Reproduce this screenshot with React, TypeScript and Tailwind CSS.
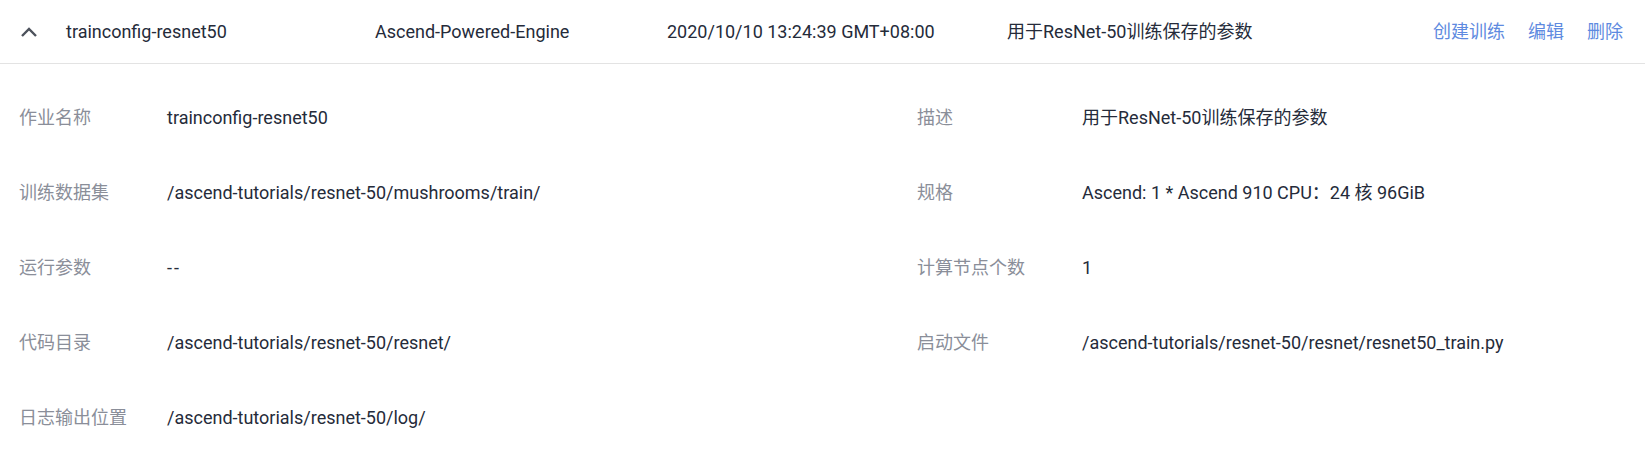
import React from "react";

const font = { fontFamily: 'Roboto, "Noto Sans CJK SC", sans-serif' };

const leftRows = [
  ["作业名称", "trainconfig-resnet50"],
  ["训练数据集", "/ascend-tutorials/resnet-50/mushrooms/train/"],
  ["运行参数", "--"],
  ["代码目录", "/ascend-tutorials/resnet-50/resnet/"],
  ["日志输出位置", "/ascend-tutorials/resnet-50/log/"],
];

const rightRows = [
  ["描述", "用于ResNet-50训练保存的参数"],
  ["规格", "Ascend: 1 * Ascend 910 CPU：24 核 96GiB"],
  ["计算节点个数", "1"],
  ["启动文件", "/ascend-tutorials/resnet-50/resnet/resnet50_train.py"],
];

const App = () => {
  return (
    <div className="w-[1645px] h-[450px] bg-white overflow-hidden text-[18px]" style={font}>
      <div className="h-16 border-b border-[#e3e3e3] flex items-center text-[#252b3a]">
        <div className="w-[66px] shrink-0 pl-[20px] flex items-center">
          <svg width="18" height="12" viewBox="0 0 18 12" fill="none">
            <path d="M2 10 L9 3 L16 10" stroke="#4d525c" strokeWidth="2.4" />
          </svg>
        </div>
        <div className="w-[309px] shrink-0">trainconfig-resnet50</div>
        <div className="w-[292px] shrink-0">Ascend-Powered-Engine</div>
        <div className="w-[340px] shrink-0">2020/10/10 13:24:39 GMT+08:00</div>
        <div className="flex-1">用于ResNet-50训练保存的参数</div>
        <div className="flex gap-[23px] pr-[22px] text-[#5e8ae0]">
          <span>创建训练</span>
          <span>编辑</span>
          <span>删除</span>
        </div>
      </div>
      <div className="flex pt-4">
        <div className="w-[917px] shrink-0 pl-[19px] flex flex-col">
          {leftRows.map(([k, v]) => (
            <div key={k} className="h-[75px] flex items-center">
              <div className="w-[148px] shrink-0 text-[#8a8e99]">{k}</div>
              <div className={v === "--" ? "text-[#252b3a] tracking-[2px]" : "text-[#252b3a]"}>{v}</div>
            </div>
          ))}
        </div>
        <div className="flex flex-col">
          {rightRows.map(([k, v]) => (
            <div key={k} className="h-[75px] flex items-center">
              <div className="w-[165px] shrink-0 text-[#8a8e99]">{k}</div>
              <div className="text-[#252b3a]">{v}</div>
            </div>
          ))}
        </div>
      </div>
    </div>
  );
};

export default App;
